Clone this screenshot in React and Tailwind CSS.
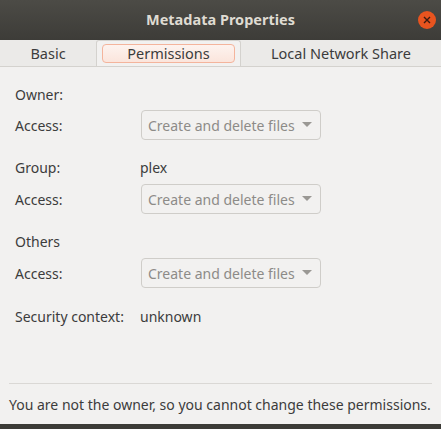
import React from "react";

const font = { fontFamily: "'Noto Sans', 'Open Sans', sans-serif" };

function Combo() {
  return (
    <div className="ml-[1px] flex h-[30px] w-[180px] items-center justify-between rounded-[4px] border border-[#cfcdc9] bg-[#f2f1f0] pl-[6px] pr-[8px] text-[14px] text-[#8d8b88]">
      <span className="whitespace-nowrap">Create and delete files</span>
      <svg width="10" height="6" viewBox="0 0 10 6" className="shrink-0">
        <path d="M0 0 L10 0 L5 5 Z" fill="#9a9894" />
      </svg>
    </div>
  );
}

function Row({ label, children, className = "" }) {
  return (
    <div className={`flex items-center ${className}`}>
      <div className="w-[125px] shrink-0">{label}</div>
      {children}
    </div>
  );
}

export default function App() {
  return (
    <div className="flex h-[429px] w-[441px] flex-col bg-[#3c3b37] text-[14px] text-[#3c3c3c]" style={font}>
      <div className="relative flex h-[40px] shrink-0 items-center justify-center bg-gradient-to-b from-[#4c4b46] to-[#3d3c38]">
        <span className="text-[14.5px] font-bold text-[#dfdbd2]">Metadata Properties</span>
        <div className="absolute right-[5px] top-[11px] flex h-[18px] w-[18px] items-center justify-center rounded-full bg-[#e8541f]">
          <svg width="8" height="8" viewBox="0 0 8 8">
            <path d="M1 1 L7 7 M7 1 L1 7" stroke="#3a1a10" strokeWidth="1.4" />
          </svg>
        </div>
      </div>

      <div className="flex h-[384px] shrink-0 flex-col bg-[#f2f1f0]">
        <div className="flex h-[27px] shrink-0 items-end border-b border-[#d4d2ce] bg-[#ebeae8] text-[14.5px]">
          <div className="flex h-[26px] w-[96px] items-center justify-center pt-[1px]">Basic</div>
          <div className="flex h-[26px] w-[145px] items-center justify-center rounded-t-[3px] border border-b-0 border-[#d4d2ce] bg-[#f2f1f0] px-[5px]">
            <div className="flex h-[19px] w-full items-center justify-center rounded-[4px] border border-[#f4b49c] bg-gradient-to-b from-[#fdf3ef] to-[#fbe5dc]">
              Permissions
            </div>
          </div>
          <div className="flex h-[26px] flex-1 items-center justify-center pt-[1px]">Local Network Share</div>
        </div>

        <div className="flex flex-1 flex-col px-[15px] pt-[18px]">
          <Row label="Owner:" className="h-[18px]" />
          <Row label="Access:" className="mt-[7px]">
            <Combo />
          </Row>
          <Row label="Group:" className="mt-[18px] h-[18px]">
            <span>plex</span>
          </Row>
          <Row label="Access:" className="mt-[8px]">
            <Combo />
          </Row>
          <Row label="Others" className="mt-[18px] h-[18px]" />
          <Row label="Access:" className="mt-[8px]">
            <Combo />
          </Row>
          <Row label="Security context:" className="mt-[19px] h-[18px]">
            <span>unknown</span>
          </Row>
        </div>

        <div className="mx-[9px] border-t border-[#dad8d5]" />
        <div className="flex h-[40px] items-center whitespace-nowrap px-[9px] text-[#3c3c3c]">
          You are not the owner, so you cannot change these permissions.
        </div>
      </div>
    </div>
  );
}
